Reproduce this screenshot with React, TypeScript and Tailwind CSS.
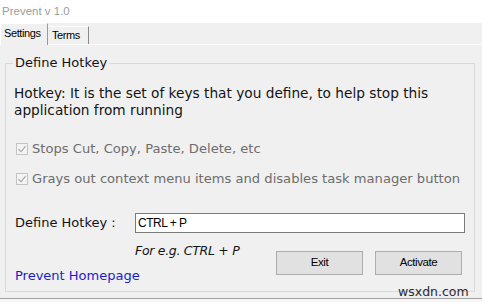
function Check({ label }: { label: string }) {
  return (
    <div className="flex items-center h-[18px]">
      <span className="ml-[2px] w-[12px] h-[12px] border border-[#c4c4c4] bg-[#f3f3f3] flex items-center justify-center">
        <svg width="10" height="10" viewBox="0 0 10 10">
          <path d="M1.5 5.2 L4 7.6 L8.6 2.2" fill="none" stroke="#a8a8a8" strokeWidth="1.1" />
        </svg>
      </span>
      <span className="ml-[4px] text-[13.1px] text-[#6d6d6d]">{label}</span>
    </div>
  );
}

export default function App() {
  return (
    <div className="relative w-[482px] h-[302px] overflow-hidden bg-white font-['DejaVu_Sans',sans-serif] text-[13px] text-[#141414]">
      {/* title */}
      <div className="h-[23px] pl-[2px] pt-[2px] leading-[18px] text-[11.5px] text-[#9c9c9c] font-['Liberation_Sans',sans-serif]">
        Prevent v 1.0
      </div>

      {/* tabs */}
      <div className="relative h-[21px] bg-[#f0f0f0] flex items-end font-['Liberation_Sans',sans-serif] text-[11px] tracking-[-0.4px] text-black">
        <div className="relative z-10 h-[22px] w-[48px] -mb-[1px] border-l border-t border-r border-l-white border-t-white border-r-[#9a9a9a] bg-[#f0f0f0] pl-[3px] leading-[18px]">
          Settings
        </div>
        <div className="h-[18px] w-[41px] border-t border-r border-t-white border-r-[#8a8a8a] pl-[4px] leading-[17px]">
          Terms
        </div>
      </div>

      {/* page */}
      <div className="h-[255px] bg-[#f0f0f0] border-t border-t-white border-b border-b-[#a0a0a0] pt-[10px]">
        <fieldset className="ml-[5px] w-[470px] h-[237px] border border-[#d9d9d9] p-0 pl-[8px]">
          <legend className="ml-[-1px] px-[2px] leading-[16px]">Define Hotkey</legend>

          <p className="mt-[14px] text-[13.7px] leading-[17px]">
            Hotkey: It is the set of keys that you define, to help stop this
            <br />
            application from running
          </p>

          <div className="mt-[21px] flex flex-col gap-[12px]">
            <Check label="Stops Cut, Copy, Paste, Delete, etc" />
            <Check label="Grays out context menu items and disables task manager button" />
          </div>

          <div className="mt-[25px] flex items-center">
            <span className="w-[121px] pl-[1px]">Define Hotkey :</span>
            <div className="w-[330px] h-[20px] bg-white border border-[#7a7a7a] pl-[2px] leading-[18px] font-['Liberation_Sans',sans-serif] text-[12px] tracking-[-0.5px] text-black">
              CTRL + P
            </div>
          </div>

          <div className="flex">
            <div className="w-[262px] flex flex-col">
              <span className="mt-[10px] pl-[121px] leading-[16px] italic text-[12.5px] tracking-[-0.3px]">For e.g. CTRL + P</span>
              <a className="mt-[9px] pl-[1px] leading-[16px] text-[#1c1cc8]">Prevent Homepage</a>
            </div>
            <div className="mt-[18px] flex gap-[12px] font-['Liberation_Sans',sans-serif] text-[11.5px] tracking-[-0.4px] text-black">
              <button className="w-[87px] h-[24px] bg-[#e1e1e1] border border-[#adadad]">Exit</button>
              <button className="w-[87px] h-[24px] bg-[#e1e1e1] border border-[#adadad]">Activate</button>
            </div>
          </div>
        </fieldset>
      </div>
      <div className="h-[3px] bg-[#f7f7f7]" />

      {/* watermark */}
      <span className="absolute left-[398px] top-[285px] text-[12.5px] leading-[14px] text-[#2a2a2a]">wsxdn.com</span>
    </div>
  );
}
